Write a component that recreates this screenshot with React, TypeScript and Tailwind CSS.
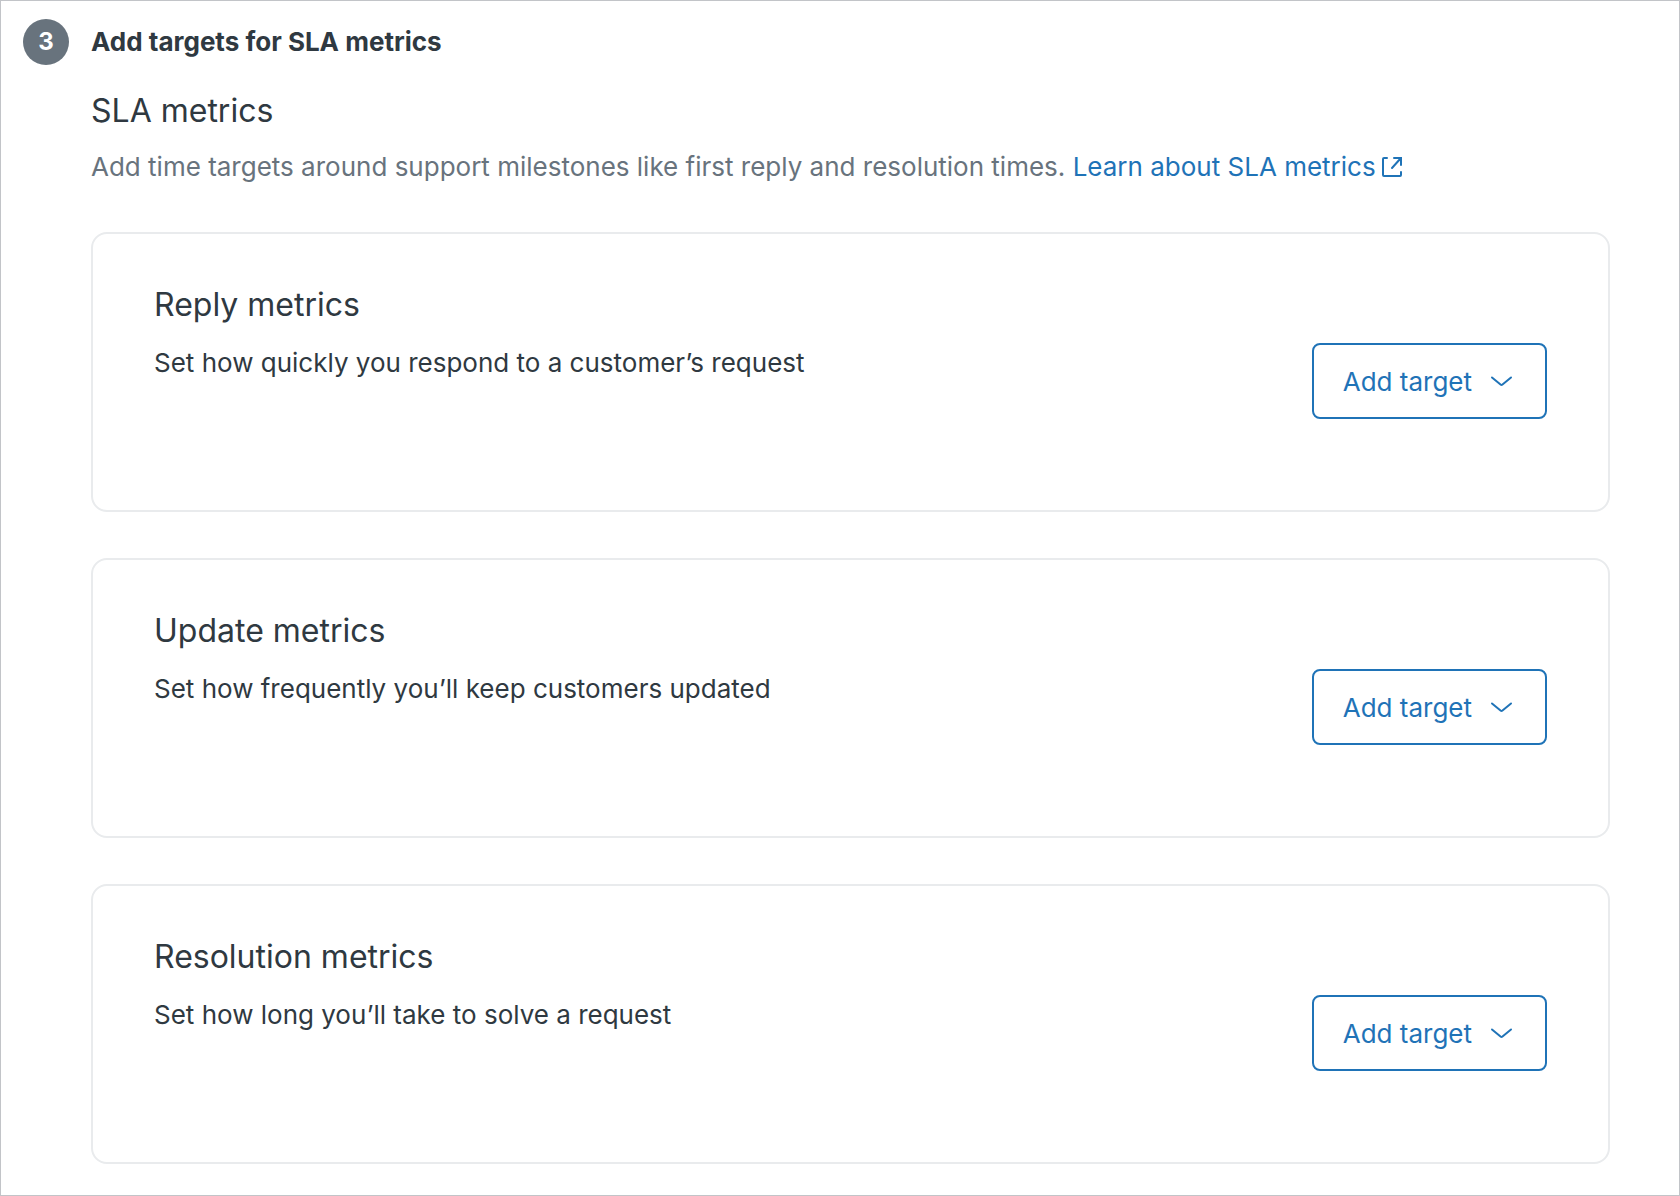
const groups = [
  { title: "Reply metrics", text: "Set how quickly you respond to a customer’s request" },
  { title: "Update metrics", text: "Set how frequently you’ll keep customers updated" },
  { title: "Resolution metrics", text: "Set how long you’ll take to solve a request" },
];

function MetricCard({ title, text }: { title: string; text: string }) {
  return (
    <section className="flex items-start justify-between rounded-2xl border-2 border-[#e9ebed] px-[61px] pt-[51px] pb-[91px]">
      <div>
        <h3 className="text-[32px] leading-[40px]">{title}</h3>
        <p className="mt-[18px] text-[26px] leading-[40px]">{text}</p>
      </div>
      <button
        type="button"
        className="mt-[58px] flex h-[76px] shrink-0 items-center gap-[18px] rounded-lg border-2 border-[#1f73b7] pr-[31px] pl-[29px] text-[26px] text-[#1f73b7]"
      >
        Add target
        <svg className="h-6 w-6" viewBox="0 0 24 24" fill="none" stroke="currentColor" strokeWidth="2" strokeLinecap="round" aria-hidden="true">
          <path d="M2 8.500l8.800 7.200c.4.300 1 .3 1.400 0l8.800-7.200" />
        </svg>
      </button>
    </section>
  );
}

export default function App() {
  return (
    <main className="min-h-screen border border-[#c2c4c8] bg-white pr-[69px] pb-7 pl-[22px] font-['Inter',sans-serif] text-[#2f3941]">
      <header className="flex items-center gap-[22px] pt-[18px]">
        <span className="flex h-[46px] w-[46px] items-center justify-center rounded-full bg-[#68737d] text-[24px] font-bold text-white">
          3
        </span>
        <h1 className="text-[26px] leading-[40px] font-bold">Add targets for SLA metrics</h1>
      </header>
      <div className="pl-[68px]">
        <h2 className="mt-[26px] text-[32px] leading-[40px]">SLA metrics</h2>
        <p className="mt-4 text-[26px] leading-[40px] text-[#68737d]">
          Add time targets around support milestones like first reply and resolution times.{" "}
          <a href="#sla-metrics" className="text-[#1f73b7]">
            Learn about SLA metrics
            <svg className="ml-[6px] inline h-5 w-5 align-[-1px]" viewBox="0 0 20 20" fill="none" stroke="currentColor" strokeWidth="2" strokeLinecap="round" aria-hidden="true">
              <path d="M5 1H2a1 1 0 0 0-1 1v16a1 1 0 0 0 1 1h16a1 1 0 0 0 1-1v-3M12 1h7v7M18.500 1.500L10 11" />
            </svg>
          </a>
        </p>
        <div className="mt-[45px] flex flex-col gap-[46px]">
          {groups.map((group) => (
            <MetricCard key={group.title} title={group.title} text={group.text} />
          ))}
        </div>
      </div>
    </main>
  );
}
